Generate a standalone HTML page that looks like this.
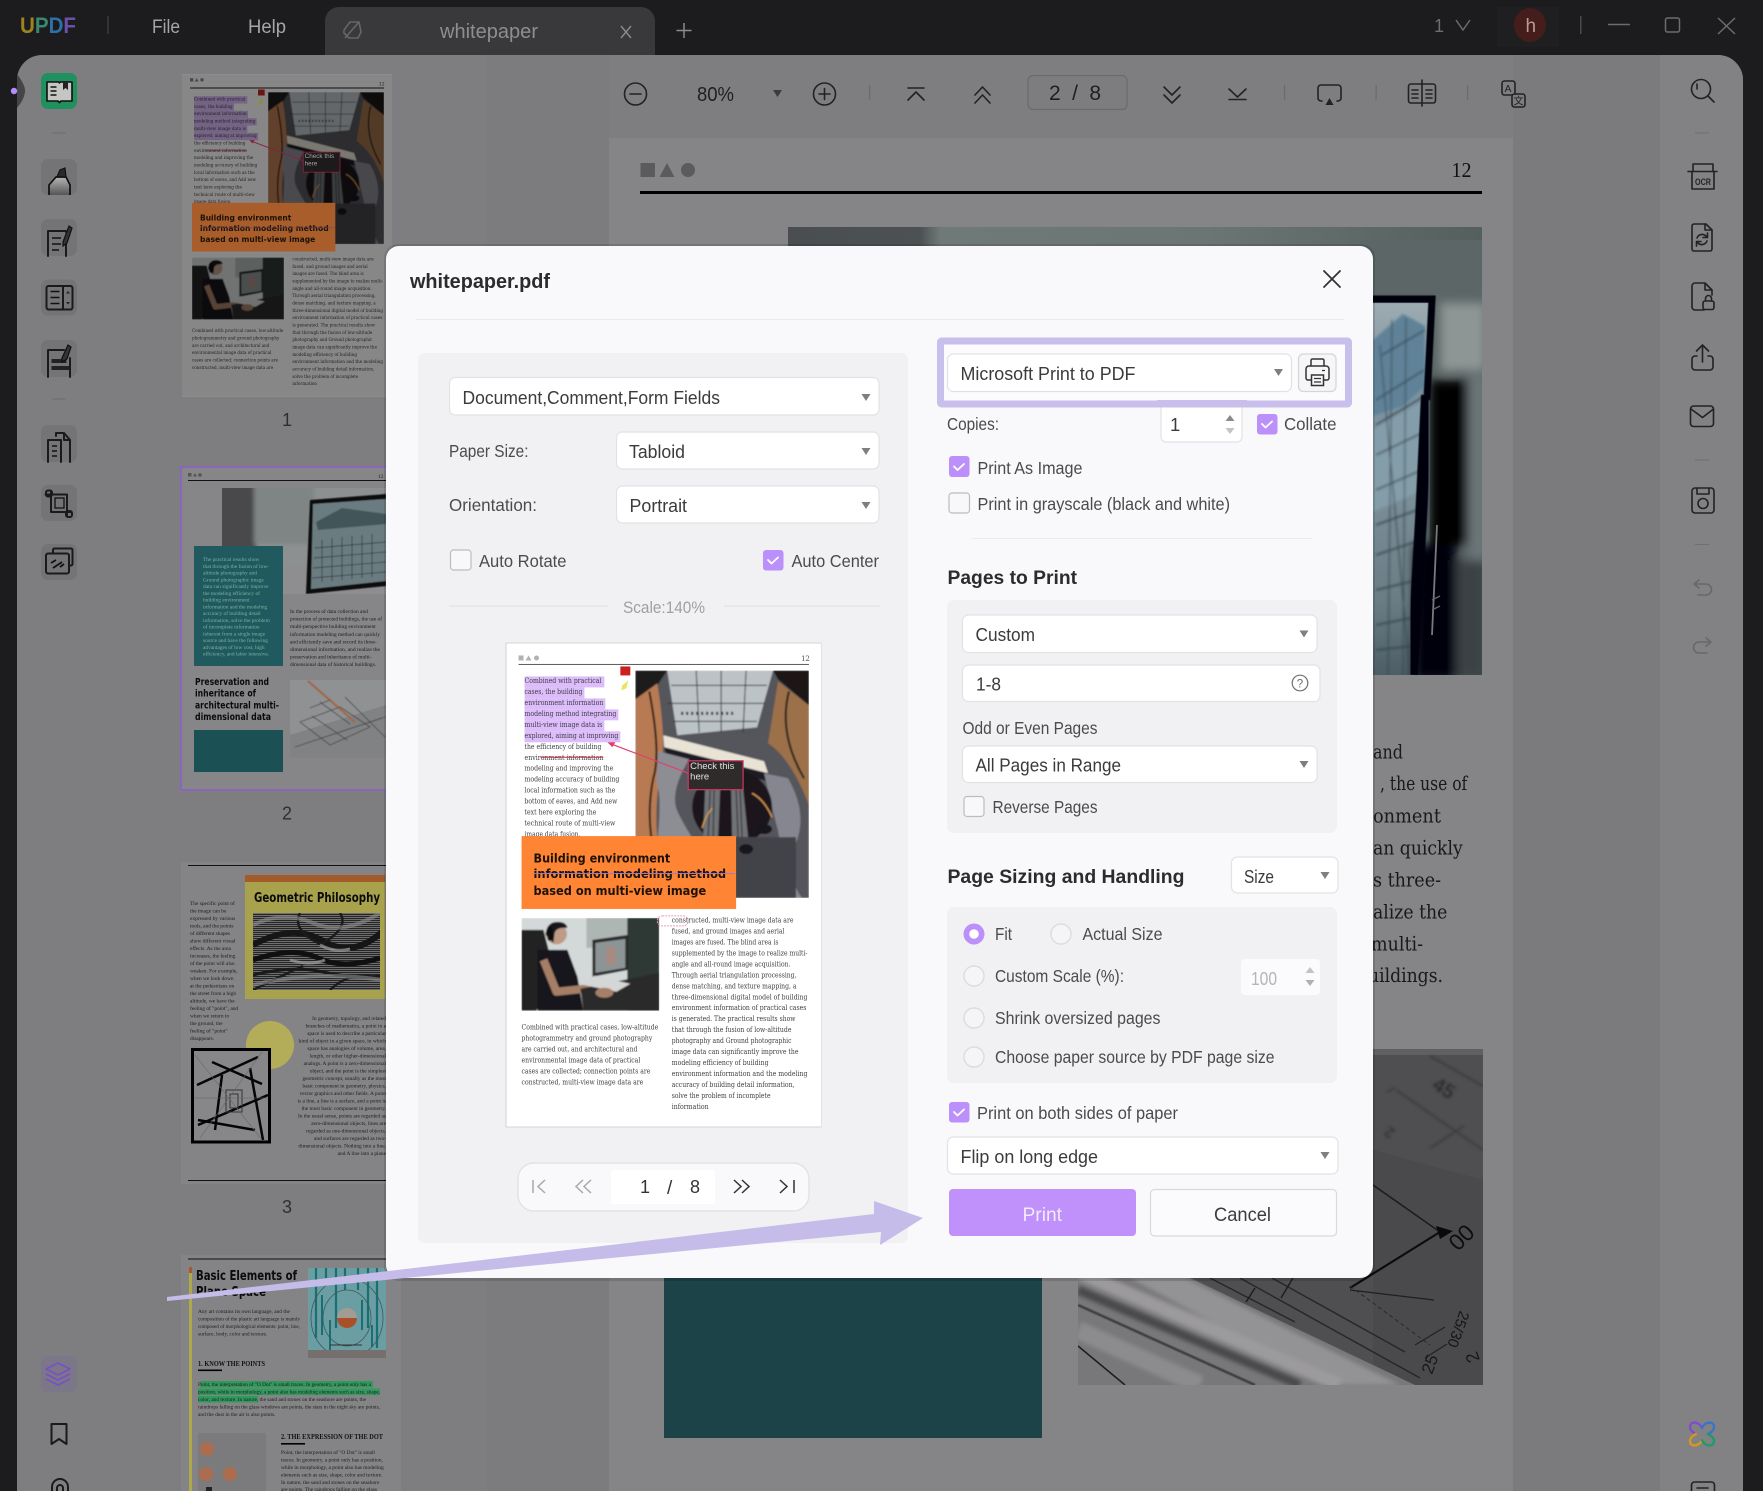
<!DOCTYPE html>
<html lang="en"><head><meta charset="utf-8"><title>UPDF whitepaper print dialog</title>
<style>
html,body{margin:0;padding:0;background:#1c1c1e;width:1763px;height:1491px;overflow:hidden}
svg.root{display:block;position:absolute;left:0;top:0}
text{font-family:"Liberation Sans","Noto Sans CJK SC",sans-serif;white-space:pre}
.u{font-size:18.5px;fill:#3b3b3e}
.l{font-size:17.5px;fill:#4b4b4e}
.b{font-size:20px;font-weight:700;fill:#2c2c2e}
.tb{font-size:19px;fill:#a6a6a6}
.sf{font-family:"DejaVu Serif",serif;font-size:7.4px;fill:#3f3f3f}
.ss{font-family:"Liberation Serif",serif;font-size:5.4px;fill:#1c1c1c}
.rb{font-family:"DejaVu Sans",sans-serif;font-weight:700;fill:#1c1206;font-size:12.5px}
.hd{font-family:"DejaVu Sans",sans-serif;font-weight:700;fill:#0b0b0b}
.mt{font-family:"DejaVu Serif",serif;font-size:19.5px;fill:#19191a}
.i{fill:none;stroke:#222;stroke-width:1.6;stroke-linecap:round;stroke-linejoin:round}
.ci{fill:none;stroke:#1a1a1a;stroke-width:2;stroke-linejoin:round;stroke-linecap:round}
.a{fill:#7f7f83}
.box{fill:#fff;stroke:#e2e2e6;stroke-width:1.2}
.on{fill:#bc90fa}
.off{fill:#f8f8fa;stroke:#bcbcc0;stroke-width:1.2}
.ck{fill:none;stroke:#fff;stroke-width:1.8;stroke-linecap:round;stroke-linejoin:round}
.ro{fill:#f5f5f7;stroke:#dcdce0;stroke-width:1.4}
.tile{fill:#747476}
</style></head><body>
<svg class="root" xmlns="http://www.w3.org/2000/svg" width="1763" height="1491" viewBox="0 0 1763 1491">
<defs>
<filter id="b1" x="-10%" y="-10%" width="120%" height="120%"><feGaussianBlur stdDeviation=".8"/></filter>
<filter id="b2" x="-20%" y="-20%" width="140%" height="140%"><feGaussianBlur stdDeviation="5"/></filter>
<filter id="b3" x="-20%" y="-20%" width="140%" height="140%"><feGaussianBlur stdDeviation="2"/></filter>
<filter id="b4" x="-20%" y="-20%" width="140%" height="140%"><feGaussianBlur stdDeviation="1.200"/></filter>
<filter id="b0" x="-10%" y="-10%" width="120%" height="120%"><feGaussianBlur stdDeviation=".4"/></filter>
<linearGradient id="g1" x1="0" y1="0" x2="0" y2="1"><stop offset="0" stop-color="#b5b5b5"/><stop offset="1" stop-color="#555"/></linearGradient>
<linearGradient id="strip" x1="788" y1="0" x2="1482" y2="0" gradientUnits="userSpaceOnUse"><stop offset="0" stop-color="#4a4e50"/><stop offset=".19" stop-color="#4c5153"/><stop offset=".22" stop-color="#6f7a78"/><stop offset=".6" stop-color="#6b7674"/><stop offset="1" stop-color="#545f5e"/></linearGradient>
<linearGradient id="scr" x1="0" y1="305" x2="0" y2="675" gradientUnits="userSpaceOnUse"><stop offset="0" stop-color="#9cabb0"/><stop offset=".2" stop-color="#7d94a2"/><stop offset=".5" stop-color="#7b909a"/><stop offset=".8" stop-color="#6a7c84"/><stop offset="1" stop-color="#4c5d66"/></linearGradient>
<pattern id="st" width="2" height="2" patternUnits="userSpaceOnUse"><rect width="2" height="2" fill="#6e6e70"/><rect width="2" height="1" fill="#262626"/></pattern>
<clipPath id="cp-main"><rect x="788" y="227" width="694" height="448"/></clipPath>
<clipPath id="cp-plan"><rect x="1078" y="1049" width="405" height="336"/></clipPath>
<clipPath id="cp-ph1"><rect x="129" y="27" width="174" height="228"/></clipPath>
<clipPath id="cp-ph2"><rect x="15" y="275" width="138" height="93"/></clipPath>
<clipPath id="cp-t2a"><rect x="222" y="488" width="164" height="106"/></clipPath>
<clipPath id="cp-t2b"><rect x="290" y="680" width="96" height="78"/></clipPath>
<clipPath id="cp-t3"><rect x="253" y="913" width="127" height="77"/></clipPath>
<clipPath id="cp-t3b"><rect x="194" y="1050" width="74" height="91"/></clipPath>
<clipPath id="cp-t4"><rect x="308" y="1268" width="78" height="90"/></clipPath>
</defs>

<!-- title bar -->
<rect width="1763" height="1491" fill="#1c1c1e"/>
<text x="20" y="33" font-size="22" font-weight="700" opacity=".85" textLength="56" lengthAdjust="spacingAndGlyphs"><tspan fill="#b3951f">U</tspan><tspan fill="#3f9a7c">P</tspan><tspan fill="#2f7fc0">D</tspan><tspan fill="#7b58c4">F</tspan></text>
<rect x="107.5" y="16" width="1" height="18" fill="#4a4a4c"/>
<text class="tb" x="152" y="33" textLength="28" lengthAdjust="spacingAndGlyphs">File</text>
<text class="tb" x="248" y="33" textLength="38" lengthAdjust="spacingAndGlyphs">Help</text>
<path d="M325 55V21a14 14 0 0 1 14-14H641a14 14 0 0 1 14 14V55Z" fill="#39393b"/>
<path d="M344 30l6-8h9l2 10-3 6h-9l-5-5zM345 38l14-16" fill="none" stroke="#666668" stroke-width="1.6"/>
<text x="440" y="38" font-size="20" fill="#8e8e90" textLength="98" lengthAdjust="spacingAndGlyphs">whitepaper</text>
<path d="M621 26l10 12M631 26l-10 12" stroke="#8a8a8c" stroke-width="1.5" fill="none"/>
<path d="M684 23v15M676.500 30.500h15" stroke="#8a8a8c" stroke-width="1.5" fill="none"/>
<text x="1434" y="32" font-size="18" fill="#6c6c6e">1</text>
<path d="M1456 20l7 10 7-10" stroke="#6c6c6e" stroke-width="1.5" fill="none"/>
<rect x="1497" y="7" width="62" height="40" fill="#1f1f21"/>
<ellipse cx="1530" cy="25" rx="16" ry="17" fill="#451d1a"/>
<text x="1525.500" y="32" font-size="19" fill="#bd9a94">h</text>
<rect x="1580" y="16" width="1.500" height="18" fill="#4a4a4c"/>
<path d="M1608 24.500h22" stroke="#6c6c6e" stroke-width="1.6"/>
<rect x="1665.500" y="18" width="14" height="14" rx="2" fill="none" stroke="#6c6c6e" stroke-width="1.5"/>
<path d="M1718 18l17 16M1735 18l-17 16" stroke="#6c6c6e" stroke-width="1.5" fill="none"/>

<!-- main panel -->
<path d="M17 80a25 25 0 0 1 25-25H1718a25 25 0 0 1 25 25V1491H17Z" fill="#7e7e80"/>
<rect x="487" y="55" width="122" height="1436" fill="#7c7c7e"/>
<rect x="1513" y="55" width="147" height="1436" fill="#7b7b7d"/>
<path d="M1660 55H1718a25 25 0 0 1 25 25V1491H1660Z" fill="#828284"/>
<rect x="609" y="138" width="904" height="1353" fill="#858587"/>
<path d="M17 74q9 12 8 18-1 8-8 16Z" fill="#454547"/>
<circle cx="14" cy="91" r="3.200" fill="#b68cff"/>

<!-- main page -->
<rect x="640.500" y="163" width="14.500" height="14" fill="#5b5b5d"/>
<path d="M667 163l7.500 14h-15Z" fill="#5b5b5d"/>
<circle cx="688" cy="170" r="7" fill="#5b5b5d"/>
<text x="1451.500" y="177" style="font-family:'Liberation Serif',serif" font-size="21" fill="#111" textLength="20" lengthAdjust="spacingAndGlyphs">12</text>
<rect x="640" y="191" width="842" height="3" fill="#000"/>

<g clip-path="url(#cp-main)">
<rect x="788" y="227" width="694" height="448" fill="url(#strip)"/>
<rect x="1360" y="240" width="122" height="70" fill="#5c6666"/>
<rect x="1360" y="303" width="70" height="372" fill="url(#scr)"/>
<g filter="url(#b2)">
<rect x="1440" y="303" width="46" height="68" fill="#8e9595"/>
<rect x="1468" y="375" width="20" height="185" fill="#6c7678"/>
<rect x="1430" y="380" width="38" height="165" fill="#000"/>
<rect x="1414" y="545" width="42" height="135" fill="#050507"/>
<rect x="1456" y="560" width="30" height="120" fill="#3a4245"/>
</g>
<g filter="url(#b4)">
<path d="M1373 340l30-26 22 12v60l-22 20-30 10Z" fill="#5f8298"/>
<path d="M1373 430l52-30-2 90-50 22Z" fill="#86a0ac" opacity=".8"/>
<path d="M1382 355l43-25M1376 400l48-30M1376 425l47-28M1376 455l46-22M1376 490l46-20M1376 525l44-16M1376 555l42-14M1376 590l42-10M1376 625l40-8M1376 650l38-4" stroke="#2c3b42" stroke-width="1.300" fill="none"/>
<path d="M1392 320l-4 355M1406 318l-3 357M1380 345l30 330" stroke="#34444c" stroke-width="1" fill="none"/>
</g>
<path d="M1360 299H1432L1427 400" stroke="#050507" stroke-width="7" fill="none" filter="url(#b0)"/>
<path d="M1427 395l-6 125-9 155" stroke="#060608" stroke-width="12" fill="none" filter="url(#b0)"/>
<path d="M1437 525l-5 110" stroke="#7a7a7a" stroke-width="1.800" fill="none"/>
<path d="M1432 600l8-4M1432 610l8-4" stroke="#666" stroke-width="1.400" fill="none"/>
</g>

<text class="mt" x="1373" y="758.500" textLength="30" lengthAdjust="spacingAndGlyphs">and</text>
<text class="mt" x="1380" y="790" textLength="87.300" lengthAdjust="spacingAndGlyphs">, the use of</text>
<text class="mt" x="1373" y="822.500" textLength="68" lengthAdjust="spacingAndGlyphs">onment</text>
<text class="mt" x="1373" y="854.500" textLength="89.700" lengthAdjust="spacingAndGlyphs">an quickly</text>
<text class="mt" x="1373" y="886.500" textLength="68" lengthAdjust="spacingAndGlyphs">s three-</text>
<text class="mt" x="1373" y="918.500" textLength="74.300" lengthAdjust="spacingAndGlyphs">alize the</text>
<text class="mt" x="1371" y="950.500" textLength="52" lengthAdjust="spacingAndGlyphs">multi-</text>
<text class="mt" x="1368" y="982" textLength="75" lengthAdjust="spacingAndGlyphs">uildings.</text>

<!-- teal + blueprint -->
<rect x="664" y="1270" width="378" height="168" fill="#1c4347"/>
<g clip-path="url(#cp-plan)">
<rect x="1078" y="1049" width="405" height="336" fill="#4f4e50"/>
<rect x="1373" y="1049" width="110" height="6" fill="#605f61"/>
<path d="M1373 1150L1483 1180V1385H1373Z" fill="#4a494b"/>
<path d="M1078 1278H1190L1415 1385H1078Z" fill="#787779"/>
<g filter="url(#b3)">
<path d="M1130 1278H1185L1400 1385H1330Z" fill="#939294"/>
<path d="M1078 1290L1300 1385" stroke="#4a4a4c" stroke-width="9"/>
<path d="M1078 1272L1340 1385" stroke="#9b9a9c" stroke-width="14"/>
<path d="M1078 1330L1200 1385" stroke="#8c8b8d" stroke-width="18"/>
</g>
<path d="M1078 1305L1255 1385" stroke="#3c3c3e" stroke-width="2.500" filter="url(#b0)"/>
<path d="M1078 1346L1125 1385" stroke="#1c1c1d" stroke-width="1.500"/>
<path d="M1210 1278L1295 1322M1240 1278L1420 1378M1272 1278L1405 1352" stroke="#202021" stroke-width="1.400" opacity=".85"/>
<path d="M1293 1278l-12 20M1255 1288l-9 14" stroke="#1c1c1d" stroke-width="1.400"/>
<path d="M1350 1288L1440 1232" stroke="#0c0c0d" stroke-width="2.200"/>
<path d="M1373 1185L1440 1232" stroke="#1c1c1d" stroke-width="1.500"/>
<path d="M1436 1226l17 5-13 8Z" fill="#0a0a0b"/>
<path d="M1350 1290L1434 1300" stroke="#1f1f20" stroke-width="1.200"/>
<path d="M1400 1280L1430 1347" stroke="#2a2a2b" stroke-width="0"/>
<path d="M1350 1286L1430 1345" stroke="#2a2a2b" stroke-width="1" stroke-dasharray="4 3"/>
<path d="M1415 1345l30-18M1425 1358l22-14" stroke="#222" stroke-width="1.200"/>
<text transform="translate(1458 1252) rotate(-45)" font-size="23" fill="#0e0e0f">00</text>
<text transform="translate(1460 1310) rotate(110)" font-size="15" fill="#171718">25/30</text>
<text transform="translate(1432 1375) rotate(-70)" font-size="17" fill="#191919">25</text>
<text transform="translate(1480 1360) rotate(-110)" font-size="18" fill="#191919">2</text>
<g filter="url(#b4)">
<text transform="translate(1431 1088) rotate(32)" font-size="20" font-weight="700" fill="#2e2e30">45</text>
<text transform="translate(1396 1130) rotate(210)" font-size="16" font-weight="700" fill="#38383a">2</text>
<path d="M1430 1056l53 30M1396 1090l87 60M1430 1148l34-22M1395 1088l-8 4" stroke="#3c3c3e" stroke-width="2" fill="none"/>
</g>
</g>

<!-- left tools -->
<rect x="41" y="73" width="36" height="36" rx="7" fill="#20905f"/>
<path d="M47 82h11c1 0 1.500 .5 1.500 1 0-.5.5-1 1.500-1h11v19H61l-1.500 1.500L58 101H47Z" fill="#c5c5c3" stroke="#0e0e0e" stroke-width="1.600" stroke-linejoin="round"/>
<path d="M50.500 87h6M50.500 91h6M50.500 95h6" stroke="#111" stroke-width="1.400"/>
<path d="M63 81h5v9l-2.500-2-2.500 2Z" fill="#222"/>
<rect x="52" y="132.500" width="14" height="1" fill="#6c6c6e"/>
<rect class="tile" x="41" y="159" width="36" height="36" rx="7"/>
<path d="M49 195v-10l7-8h10l4 8v10" fill="url(#g1)" stroke="#0f0f0f" stroke-width="1.700" stroke-linejoin="round"/>
<path d="M57 177l3-7 5-2 1 9Z" fill="#2a2a2a" stroke="#111" stroke-width="1.200"/>
<rect class="tile" x="41" y="219" width="36" height="37" rx="7"/>
<path d="M66 232v-1H48v25M66 240v16" class="ci"/>
<path d="M52 238h9M52 244h9M52 250h7" stroke="#111" stroke-width="1.500"/>
<path d="M63 242l6-16 3 2-5 15-4 3Z" fill="#333" stroke="#111" stroke-width="1.200"/>
<rect class="tile" x="41" y="279.500" width="36" height="36" rx="7"/>
<rect x="46.500" y="286" width="26" height="23.500" rx="2" class="ci"/>
<path d="M63 286v23.500" class="ci"/>
<path d="M50.500 291.500h9M50.500 297.500h9M50.500 303.500h9" stroke="#111" stroke-width="1.500"/>
<path d="M66 293.500h4l-2-2.500ZM66 302h4l-2 2.500Z" fill="#222"/>
<rect class="tile" x="41" y="340" width="36" height="37" rx="7"/>
<path d="M64 350H48v27M70 358v19" class="ci"/>
<rect x="51.500" y="359" width="15" height="4" fill="#222"/>
<rect x="51.500" y="366" width="18" height="4" fill="#222"/>
<path d="M62 358l6-13 3 2-4 12-5 3Z" fill="#333" stroke="#111" stroke-width="1.200"/>
<rect x="52" y="398.500" width="14" height="1" fill="#6c6c6e"/>
<rect class="tile" x="41" y="425" width="36" height="37" rx="7"/>
<path d="M48 462v-22h13l0 22M56 436v-3h8l6 7v22M64 433v7h6" class="ci"/>
<path d="M52 446h5M52 451h5M52 456h5" stroke="#111" stroke-width="1.500"/>
<rect class="tile" x="41" y="485" width="36" height="36" rx="7"/>
<path d="M51 491v21h20M45.500 494.500H67v21" class="ci"/>
<rect x="46" y="490.500" width="6" height="6" rx="2" class="ci"/>
<rect x="66" y="511" width="6" height="6" rx="2" class="ci"/>
<rect x="55" y="498" width="9" height="10" fill="none" stroke="#111" stroke-width="1.300"/>
<rect class="tile" x="41" y="544" width="36" height="36" rx="7"/>
<path d="M53 553v-3a1.500 1.500 0 0 1 1.500-1.500H71a1.500 1.500 0 0 1 1.500 1.500v14a1.500 1.500 0 0 1-1.500 1.500h-2" class="ci"/>
<rect x="46" y="553.500" width="23" height="20" rx="2" class="ci"/>
<path d="M51 563l5-3M53 568l9-6M60 567l4-3" stroke="#111" stroke-width="1.800"/>
<rect x="41" y="1356" width="36" height="36" rx="6" fill="#7c7788"/>
<path d="M58 1363l12 6-12 6-12-6ZM46 1374l12 6 12-6M46 1379l12 6 12-6" fill="none" stroke="#7750c6" stroke-width="1.600" stroke-linejoin="round"/>
<path d="M51.500 1424h15v20l-7.500-5-7.500 5Z" class="ci"/>
<path d="M52 1491v-4a8 8 0 0 1 16 0v4M57 1491v-3a3 3 0 0 1 6 0v3" class="ci"/>

<!-- thumbnail 1 -->
<svg x="182" y="74" width="210" height="323" viewBox="0 0 315 484">
<rect width="315" height="484" fill="#fff"/>
<rect x="12" y="6" width="5" height="5" fill="#8a8a8a"/><path d="M22 6l3 5h-6Z" fill="#8a8a8a"/><circle cx="30" cy="8.500" r="2.500" fill="#8a8a8a"/>
<text class="sf" x="295" y="17" textLength="9">12</text>
<rect x="12" y="20" width="291" height="1.500" fill="#222"/>
<g clip-path="url(#cp-ph1)"><g filter="url(#b1)">
<rect x="129" y="27" width="174" height="228" fill="#55555b"/>
<path d="M161 27H267L251 84L171 92Z" fill="#bcc3c7"/>
<path d="M129 27H161L151 42L129 56Z" fill="#1c1a1a"/><path d="M267 27H303V62L272 36Z" fill="#1b1919"/>
<path d="M129 56L151 40Q160 95 155 125Q148 160 151 194H129Z" fill="#b87a52"/>
<path d="M303 62L272 38L262 100Q285 115 303 162Z" fill="#9c7048"/>
<path d="M143 48Q155 110 147 135Q141 165 145 194" stroke="#221a16" stroke-width="2" fill="none"/>
<path d="M283 48Q272 90 298 135" stroke="#1e1a18" stroke-width="2" fill="none"/>
<path d="M157 92L258 118L262 130L158 104Z" fill="#e9e3d6"/>
<path d="M158 104L262 130L262 138L160 112Z" fill="#1f1f22"/>
<path d="M152 108L183 116Q162 150 172 170T190 200L151 200Q156 150 150 140Z" fill="#8d8d94"/>
<path d="M258 130L282 135Q302 170 290 200T296 255H262Q280 210 270 180Z" fill="#868690"/>
<ellipse cx="226" cy="164" rx="40" ry="38" fill="#1a191c"/>
<path d="M199 146H214L212 194H197ZM225 146H237L242 194H226Z" fill="#6f7276"/>
<path d="M204 146l-2 48M208 146l-1 48M230 146l2 48M234 146l2 48" stroke="#232326" stroke-width="1" fill="none"/>
<path d="M190 194H290V255H222Q205 225 190 194Z" fill="#434349"/>
<path d="M206 165q-7 8-10 20M246 150q12 6 20 24" stroke="#d99a50" stroke-width="1.400" fill="none"/>
<path d="M165 42h96M161 60h98M167 78h84M190 27l3 62M215 27v62M240 27l-3 62" stroke="#33363a" stroke-width="1" fill="none"/>
<path d="M175 70h55" stroke="#222" stroke-width="3" stroke-dasharray="2 3"/>
<ellipse cx="258" cy="186" rx="8" ry="5" fill="#17171a"/><ellipse cx="240" cy="206" rx="7" ry="5" fill="#17171a"/>
</g></g>
<g fill="#dcbcfb"><rect x="18" y="33" width="80" height="11"/><rect x="18" y="44" width="60" height="11"/><rect x="18" y="55" width="81" height="11"/><rect x="18" y="66" width="94" height="11"/><rect x="18" y="77" width="80" height="11"/><rect x="18" y="88" width="96" height="11"/></g>
<text class="sf" x="18" y="39.500" textLength="77" lengthAdjust="spacingAndGlyphs">Combined with practical</text>
<text class="sf" x="18" y="50.500" textLength="58" lengthAdjust="spacingAndGlyphs">cases, the building</text>
<text class="sf" x="18" y="61.500" textLength="79" lengthAdjust="spacingAndGlyphs">environment information</text>
<text class="sf" x="18" y="72.500" textLength="92" lengthAdjust="spacingAndGlyphs">modeling method integrating</text>
<text class="sf" x="18" y="83.500" textLength="78" lengthAdjust="spacingAndGlyphs">multi-view image data is</text>
<text class="sf" x="18" y="94.500" textLength="94" lengthAdjust="spacingAndGlyphs">explored, aiming at improving</text>
<text class="sf" x="18" y="105.500" textLength="77" lengthAdjust="spacingAndGlyphs">the efficiency of building</text>
<text class="sf" x="18" y="116.500" textLength="79" lengthAdjust="spacingAndGlyphs">environment information</text>
<rect x="34" y="113.500" width="63" height="1" fill="#d0304a"/>
<text class="sf" x="18" y="127.500" textLength="89" lengthAdjust="spacingAndGlyphs">modeling and improving the</text>
<text class="sf" x="18" y="138.500" textLength="95" lengthAdjust="spacingAndGlyphs">modeling accuracy of building</text>
<text class="sf" x="18" y="149.500" textLength="91" lengthAdjust="spacingAndGlyphs">local information such as the</text>
<text class="sf" x="18" y="160.500" textLength="93" lengthAdjust="spacingAndGlyphs">bottom of eaves, and Add new</text>
<text class="sf" x="18" y="171.500" textLength="72" lengthAdjust="spacingAndGlyphs">text here exploring the</text>
<text class="sf" x="18" y="182.500" textLength="91" lengthAdjust="spacingAndGlyphs">technical route of multi-view</text>
<text class="sf" x="18" y="193.500" textLength="56" lengthAdjust="spacingAndGlyphs">image data fusion.</text>
<text class="sf" x="165.500" y="279.500" textLength="122" lengthAdjust="spacingAndGlyphs">constructed, multi-view image data are</text>
<text class="sf" x="165.500" y="290.500" textLength="113" lengthAdjust="spacingAndGlyphs">fused, and ground images and aerial</text>
<text class="sf" x="165.500" y="301.500" textLength="107" lengthAdjust="spacingAndGlyphs">images are fused. The blind area is</text>
<text class="sf" x="165.500" y="312.500" textLength="136" lengthAdjust="spacingAndGlyphs">supplemented by the image to realize multi-</text>
<text class="sf" x="165.500" y="323.500" textLength="119" lengthAdjust="spacingAndGlyphs">angle and all-round image acquisition.</text>
<text class="sf" x="165.500" y="334.500" textLength="125" lengthAdjust="spacingAndGlyphs">Through aerial triangulation processing,</text>
<text class="sf" x="165.500" y="345.500" textLength="125" lengthAdjust="spacingAndGlyphs">dense matching, and texture mapping, a</text>
<text class="sf" x="165.500" y="356.500" textLength="136" lengthAdjust="spacingAndGlyphs">three-dimensional digital model of building</text>
<text class="sf" x="165.500" y="367.500" textLength="135" lengthAdjust="spacingAndGlyphs">environment information of practical cases</text>
<text class="sf" x="165.500" y="378.500" textLength="124" lengthAdjust="spacingAndGlyphs">is generated. The practical results show</text>
<text class="sf" x="165.500" y="389.500" textLength="120" lengthAdjust="spacingAndGlyphs">that through the fusion of low-altitude</text>
<text class="sf" x="165.500" y="400.500" textLength="120" lengthAdjust="spacingAndGlyphs">photography and Ground photographic</text>
<text class="sf" x="165.500" y="411.500" textLength="127" lengthAdjust="spacingAndGlyphs">image data can significantly improve the</text>
<text class="sf" x="165.500" y="422.500" textLength="97" lengthAdjust="spacingAndGlyphs">modeling efficiency of building</text>
<text class="sf" x="165.500" y="433.500" textLength="136" lengthAdjust="spacingAndGlyphs">environment information and the modeling</text>
<text class="sf" x="165.500" y="444.500" textLength="123" lengthAdjust="spacingAndGlyphs">accuracy of building detail information,</text>
<text class="sf" x="165.500" y="455.500" textLength="99" lengthAdjust="spacingAndGlyphs">solve the problem of incomplete</text>
<text class="sf" x="165.500" y="466.500" textLength="37" lengthAdjust="spacingAndGlyphs">information</text>
<g clip-path="url(#cp-ph2)"><g filter="url(#b1)">
<rect x="15" y="275" width="138" height="93" fill="#d3d9d8"/>
<rect x="80" y="275" width="45" height="30" fill="#aeb6b4"/><rect x="121" y="275" width="32" height="93" fill="#2e3836"/>
<path d="M86 297l36-5v35l-36 7Z" fill="#2a2a2c"/><path d="M89 300l30-4v29l-30 5Z" fill="#8c9496"/><rect x="100" y="304" width="9" height="18" fill="#a88a80"/>
<path d="M15 287H37L48 330L30 368H15Z" fill="#212123"/>
<path d="M31 307H61L71 334L77 368H31Z" fill="#17171a"/>
<circle cx="50" cy="291" r="10.500" fill="#bf9a86"/><path d="M39 292q1-13 12-13 9 0 10 6-12-1-13 6l-1 9Z" fill="#16161a"/>
<rect x="41" y="284" width="5" height="14" rx="2.500" fill="#0c0c0e"/>
<path d="M37 317L50 349L97 344" stroke="#a57e66" stroke-width="8" fill="none" stroke-linejoin="round"/>
<path d="M74 346L153 330V368H77Z" fill="#29292b"/>
<path d="M88 333l36 8-14 8-34-7Z" fill="#d5d6d6"/>
<ellipse cx="98" cy="350" rx="9" ry="5" fill="#a67f69"/>
</g></g>
<text class="sf" x="15" y="387" textLength="137" lengthAdjust="spacingAndGlyphs">Combined with practical cases, low-altitude</text>
<text class="sf" x="15" y="398" textLength="131" lengthAdjust="spacingAndGlyphs">photogrammetry and ground photography</text>
<text class="sf" x="15" y="409" textLength="116" lengthAdjust="spacingAndGlyphs">are carried out, and architectural and</text>
<text class="sf" x="15" y="420" textLength="119" lengthAdjust="spacingAndGlyphs">environmental image data of practical</text>
<text class="sf" x="15" y="431" textLength="129" lengthAdjust="spacingAndGlyphs">cases are collected; connection points are</text>
<text class="sf" x="15" y="442" textLength="122" lengthAdjust="spacingAndGlyphs">constructed, multi-view image data are</text>
<rect width="315" height="484" fill="#000" opacity=".47"/>
<rect x="15" y="193" width="215" height="73" fill="#a85d2a"/>
<text class="rb" x="27" y="219.700" textLength="137" lengthAdjust="spacingAndGlyphs">Building environment</text>
<text class="rb" x="27" y="235.200" textLength="193" lengthAdjust="spacingAndGlyphs">information modeling method</text>
<text class="rb" x="27" y="252" textLength="173" lengthAdjust="spacingAndGlyphs">based on multi-view image</text>
<rect x="27" y="230" width="202" height="1" fill="#6b4a70"/>
<path d="M103 100L182 130" stroke="#8a1f40" stroke-width="1.300"/>
<path d="M101 99l8 0-3 5Z" fill="#8a1f40"/>
<rect x="182" y="117" width="55" height="30" fill="#1d1a1b" stroke="#8a1f40" stroke-width="1.300"/>
<text x="184" y="126" font-size="9.500" fill="#a5a5a5">Check this</text><text x="184" y="137" font-size="9.500" fill="#a5a5a5">here</text>
<rect x="114" y="23" width="10" height="9" fill="#6a1414"/>
<path d="M116 40l6-3-2 7-5 2Z" fill="#8f8c2c"/>
</svg>
<text x="287" y="426" text-anchor="middle" font-size="18" fill="#2f2f31">1</text>

<!-- thumbnail 2 -->
<rect x="181" y="467" width="240" height="323" fill="#868688" stroke="#8a63c4" stroke-width="1.800"/>
<rect x="188" y="473" width="3.500" height="3.500" fill="#555"/><path d="M195 473l2 3.500h-4Z" fill="#555"/><circle cx="200" cy="475" r="1.800" fill="#555"/>
<text class="ss" x="378" y="478" font-size="5">12</text>
<rect x="188" y="480" width="210" height="1" fill="#111"/>
<g clip-path="url(#cp-t2a)">
<rect x="222" y="488" width="164" height="106" fill="#8c9090"/>
<rect x="222" y="565" width="164" height="30" fill="#8e8e90"/>
<g filter="url(#b3)"><rect x="218" y="484" width="38" height="85" fill="#484a4b"/><rect x="254" y="484" width="60" height="60" fill="#7f8585"/></g>
<g filter="url(#b0)">
<path d="M310 500l76-6v92l-80 8Z" fill="#0b0d0e"/>
<path d="M313 504l73-5v82l-75 8Z" fill="#6a7c80"/>
<path d="M316 522l26-14 44 6v10l-68 6Z" fill="#43565a"/>
<path d="M322 540v42M332 538v43M342 537v43M352 536v43M362 535v43M372 534v43M315 548l71-6M314 558l72-6M313 568l73-6M312 578l74-6" stroke="#283438" stroke-width=".7" fill="none"/>
</g>
</g>
<rect x="194" y="546" width="89" height="120" fill="#215a5e"/>
<text class="ss" style="fill:#7cb1a4" x="203" y="561">The practical results show</text>
<text class="ss" style="fill:#7cb1a4" x="203" y="567.800">that through the fusion of low-</text>
<text class="ss" style="fill:#7cb1a4" x="203" y="574.600">altitude photography and</text>
<text class="ss" style="fill:#7cb1a4" x="203" y="581.300">Ground photographic image</text>
<text class="ss" style="fill:#7cb1a4" x="203" y="588">data can significantly improve</text>
<text class="ss" style="fill:#7cb1a4" x="203" y="594.800">the modeling efficiency of</text>
<text class="ss" style="fill:#7cb1a4" x="203" y="601.600">building environment</text>
<text class="ss" style="fill:#7cb1a4" x="203" y="608.300">information and the modeling</text>
<text class="ss" style="fill:#7cb1a4" x="203" y="615">accuracy of building detail</text>
<text class="ss" style="fill:#7cb1a4" x="203" y="621.800">information, solve the problem</text>
<text class="ss" style="fill:#7cb1a4" x="203" y="628.600">of incomplete information</text>
<text class="ss" style="fill:#7cb1a4" x="203" y="635.300">inherent from a single image</text>
<text class="ss" style="fill:#7cb1a4" x="203" y="642">source and have the following</text>
<text class="ss" style="fill:#7cb1a4" x="203" y="648.800">advantages of low cost, high</text>
<text class="ss" style="fill:#7cb1a4" x="203" y="655.600">efficiency, and labor intensive.</text>
<text class="ss" x="290" y="613">In the process of data collection and</text>
<text class="ss" x="290" y="620.500" textLength="92" lengthAdjust="spacingAndGlyphs">protection of protected buildings, the use of</text>
<text class="ss" x="290" y="628">multi-perspective building environment</text>
<text class="ss" x="290" y="636" textLength="90" lengthAdjust="spacingAndGlyphs">information modeling method can quickly</text>
<text class="ss" x="290" y="643.500">and efficiently save and record its three-</text>
<text class="ss" x="290" y="651" textLength="90" lengthAdjust="spacingAndGlyphs">dimensional information, and realize the</text>
<text class="ss" x="290" y="658.500">preservation and inheritance of multi-</text>
<text class="ss" x="290" y="666" textLength="86" lengthAdjust="spacingAndGlyphs">dimensional data of historical buildings.</text>
<text class="hd" x="195" y="685" font-size="10" textLength="74" lengthAdjust="spacingAndGlyphs">Preservation and</text>
<text class="hd" x="195" y="696.500" font-size="10" textLength="61" lengthAdjust="spacingAndGlyphs">inheritance of</text>
<text class="hd" x="195" y="708.500" font-size="10" textLength="84" lengthAdjust="spacingAndGlyphs">architectural multi-</text>
<text class="hd" x="195" y="720" font-size="10" textLength="76" lengthAdjust="spacingAndGlyphs">dimensional data</text>
<g clip-path="url(#cp-t2b)">
<rect x="290" y="680" width="96" height="78" fill="#8f9192"/>
<path d="M290 735L386 705V758H290Z" fill="#808283"/>
<g filter="url(#b0)">
<path d="M308 681L355 722" stroke="#a3664a" stroke-width="2"/>
<path d="M300 722l40-15 30 20-40 18ZM320 702l30 22M295 747l90-30M345 697l40 40M312 716l35 24M330 700l-20 8" stroke="#3c3c3c" stroke-width=".6" fill="none"/>
</g>
</g>
<rect x="194" y="730" width="89" height="42" fill="#1b5054"/>
<text x="287" y="819.500" text-anchor="middle" font-size="18" fill="#2f2f31">2</text>

<!-- thumbnail 3 -->
<rect x="181" y="862" width="220" height="322" fill="#848486"/>
<rect x="188" y="865" width="205" height="1" fill="#111"/>
<rect x="245" y="875" width="140" height="7" fill="#a45b2c"/>
<rect x="245" y="882" width="140" height="117" fill="#a8a24c"/>
<text class="hd" x="254" y="902" font-size="13" textLength="126" lengthAdjust="spacingAndGlyphs">Geometric Philosophy</text>
<rect x="253" y="913" width="127" height="77" fill="url(#st)"/>
<g clip-path="url(#cp-t3)" fill="none">
<path d="M253 945q40-22 70-4t60-10" stroke="#161616" stroke-width="6"/>
<path d="M253 960q40-14 65-2t62 0" stroke="#101010" stroke-width="5"/>
<path d="M253 975q40-10 70-3t60 4" stroke="#1a1a1a" stroke-width="3"/>
<path d="M300 913q-10 20 30 35M340 913q10 15-20 32M330 990q20-20 50-12M253 990q30-15 50-24" stroke="#1c1c1c" stroke-width="2.500"/>
<path d="M253 925q30-15 60-2t67-10M253 985q60-15 130-5" stroke="#8d8d8f" stroke-width="4" opacity=".6"/>
<path d="M320 945q15 8 30 4M290 960q20 6 35 0" stroke="#a2a2a4" stroke-width="3" opacity=".7"/>
</g>
<text class="ss" x="190" y="905">The specific point of</text>
<text class="ss" x="190" y="912.500">the image can be</text>
<text class="ss" x="190" y="920">expressed by various</text>
<text class="ss" x="190" y="927.500">tools, and the points</text>
<text class="ss" x="190" y="935">of different shapes</text>
<text class="ss" x="190" y="942.500">show different visual</text>
<text class="ss" x="190" y="950">effects. As the area</text>
<text class="ss" x="190" y="957.500">increases, the feeling</text>
<text class="ss" x="190" y="965">of the point will also</text>
<text class="ss" x="190" y="972.500">weaken. For example,</text>
<text class="ss" x="190" y="980">when we look down</text>
<text class="ss" x="190" y="987.500">at the pedestrians on</text>
<text class="ss" x="190" y="995">the street from a high</text>
<text class="ss" x="190" y="1002.500">altitude, we have the</text>
<text class="ss" x="190" y="1010">feeling of "point", and</text>
<text class="ss" x="190" y="1017.500">when we return to</text>
<text class="ss" x="190" y="1025">the ground, the</text>
<text class="ss" x="190" y="1032.500">feeling of "point"</text>
<text class="ss" x="190" y="1040">disappears.</text>
<circle cx="270" cy="1045" r="24" fill="#b3ad5a"/>
<rect x="192.500" y="1049.500" width="77" height="92.500" fill="#878789" stroke="#000" stroke-width="3"/>
<g clip-path="url(#cp-t3b)" fill="none">
<path d="M197 1085L258 1057M212 1062L262 1084M198 1120L255 1130M222 1075L215 1130M250 1068L263 1140M198 1125L268 1095" stroke="#050505" stroke-width="2.500"/>
<path d="M226 1090h16v22h-16ZM230 1094h8v14h-8Z" stroke="#333" stroke-width="1"/>
<path d="M195 1055L262 1140M262 1052L200 1138M194 1098L270 1098" stroke="#666" stroke-width=".6"/>
</g>
<g text-anchor="end">
<text class="ss" x="386" y="1020">In geometry, topology, and related</text>
<text class="ss" x="386" y="1027.500">branches of mathematics, a point in a</text>
<text class="ss" x="386" y="1035">space is used to describe a particular</text>
<text class="ss" x="386" y="1042.500">kind of object in a given space, in which</text>
<text class="ss" x="386" y="1050">space has analogies of volume, area,</text>
<text class="ss" x="386" y="1057.500">length, or other higher-dimensional</text>
<text class="ss" x="386" y="1065">analogs. A point is a zero-dimensional</text>
<text class="ss" x="386" y="1072.500">object, and the point is the simplest</text>
<text class="ss" x="386" y="1080">geometric concept, usually as the most</text>
<text class="ss" x="386" y="1087.500">basic component in geometry, physics,</text>
<text class="ss" x="386" y="1095">vector graphics and other fields. A point</text>
<text class="ss" x="386" y="1102.500">is a line, a line is a surface, and a point is</text>
<text class="ss" x="386" y="1110">the most basic component in geometry.</text>
<text class="ss" x="386" y="1117.500">In the usual sense, points are regarded as</text>
<text class="ss" x="386" y="1125">zero-dimensional objects, lines are</text>
<text class="ss" x="386" y="1132.500">regarded as one-dimensional objects,</text>
<text class="ss" x="386" y="1140">and surfaces are regarded as two-</text>
<text class="ss" x="386" y="1147.500">dimensional objects. Nothing into a line,</text>
<text class="ss" x="386" y="1155">and A line into a plane</text>
</g>
<rect x="188" y="1180" width="205" height="1" fill="#111"/>
<text x="287" y="1213" text-anchor="middle" font-size="18" fill="#2f2f31">3</text>

<!-- thumbnail 4 -->
<rect x="181" y="1255" width="220" height="236" fill="#848486"/>
<rect x="188" y="1258.500" width="205" height="1" fill="#111"/>
<rect x="189" y="1267" width="3" height="6" fill="#a45b2c"/>
<rect x="189" y="1273" width="3" height="218" fill="#b0a94c"/>
<text class="hd" x="196" y="1280" font-size="13" textLength="101" lengthAdjust="spacingAndGlyphs">Basic Elements of</text>
<text class="hd" x="196" y="1296" font-size="13" textLength="70" lengthAdjust="spacingAndGlyphs">Plane Space</text>
<rect x="308" y="1268" width="78" height="90" fill="#6a9ea3"/>
<g clip-path="url(#cp-t4)" fill="none">
<path d="M316 1268v70M326 1268v10M336 1268v60M345 1268v22M358 1268v22M368 1268v60M377 1268v80" stroke="#1a6f74" stroke-width="2.200"/>
<path d="M322 1295v40M330 1320v30M362 1300v30M372 1325v22" stroke="#1a6f74" stroke-width="2"/>
<ellipse cx="347" cy="1318" rx="36" ry="40" stroke="#3a5a5e" stroke-width=".8"/>
<ellipse cx="347" cy="1318" rx="24" ry="28" stroke="#3a5a5e" stroke-width=".8"/>
<circle cx="347" cy="1318" r="10" fill="#a39c95"/>
<path d="M337 1318h20a10 10 0 0 1-20 0Z" fill="#aa5028"/>
<rect x="308" y="1350" width="78" height="8" fill="#75706e"/>
<path d="M330 1345h32" stroke="#333" stroke-width="1"/>
</g>
<text class="ss" x="198" y="1313">Any art contains its own language, and the</text>
<text class="ss" x="198" y="1320.500" textLength="102" lengthAdjust="spacingAndGlyphs">composition of the plastic art language is mainly</text>
<text class="ss" x="198" y="1328" textLength="102" lengthAdjust="spacingAndGlyphs">composed of morphological elements: point, line,</text>
<text class="ss" x="198" y="1335.500">surface, body, color and texture.</text>
<text x="198" y="1366" font-size="7" font-weight="700" style="font-family:'Liberation Serif',serif;fill:#121212" textLength="67" lengthAdjust="spacingAndGlyphs">1. KNOW THE POINTS</text>
<rect x="198" y="1369.500" width="24" height="1.600" fill="#000"/>
<rect x="200" y="1381" width="173" height="6.500" fill="#2f9a5c"/>
<rect x="198" y="1388.500" width="182" height="6.500" fill="#2f9a5c"/>
<rect x="198" y="1396" width="60" height="6.500" fill="#2f9a5c"/>
<text class="ss" x="198" y="1386" textLength="173" lengthAdjust="spacingAndGlyphs">Point, the interpretation of "O Dot" is small traces. In geometry, a point only has a</text>
<text class="ss" x="198" y="1393.500" textLength="182" lengthAdjust="spacingAndGlyphs">position, while in morphology, a point also has modeling elements such as size, shape,</text>
<text class="ss" x="198" y="1401" textLength="168" lengthAdjust="spacingAndGlyphs">color, and texture. In nature, the sand and stones on the seashore are points, the</text>
<text class="ss" x="198" y="1408.500" textLength="182" lengthAdjust="spacingAndGlyphs">raindrops falling on the glass windows are points, the stars in the night sky are points,</text>
<text class="ss" x="198" y="1416">and the dust in the air is also points.</text>
<rect x="198" y="1433" width="68" height="58" fill="#7b7b7d"/>
<circle cx="207" cy="1449" r="7" fill="#ac6d4f"/><circle cx="206" cy="1474" r="7" fill="#ac6d4f"/><circle cx="230" cy="1474" r="7" fill="#ac6d4f"/>
<rect x="206" y="1487" width="6" height="4" fill="#222"/>
<text x="281" y="1439" font-size="7" font-weight="700" style="font-family:'Liberation Serif',serif;fill:#121212" textLength="102" lengthAdjust="spacingAndGlyphs">2. THE EXPRESSION OF THE DOT</text>
<rect x="281" y="1443" width="24" height="1.600" fill="#000"/>
<text class="ss" x="281" y="1454">Point, the interpretation of "O Dot" is small</text>
<text class="ss" x="281" y="1461.500">traces. In geometry, a point only has a position,</text>
<text class="ss" x="281" y="1469">while in morphology, a point also has modeling</text>
<text class="ss" x="281" y="1476.500">elements such as size, shape, color and texture.</text>
<text class="ss" x="281" y="1484">In nature, the sand and stones on the seashore</text>
<text class="ss" x="281" y="1491">are points. The raindrops falling on the glass</text>

<!-- toolbar -->
<circle cx="635.500" cy="94" r="11" class="i"/><path d="M630 94h11" class="i"/>
<text x="697" y="101" font-size="20" fill="#1f1f1f" textLength="37" lengthAdjust="spacingAndGlyphs">80%</text>
<path d="M773 90h9l-4.500 7Z" fill="#3c3c3e"/>
<circle cx="824.500" cy="94" r="11" class="i"/><path d="M819 94h11M824.500 88.500v11" class="i"/>
<rect x="869" y="85" width="1.200" height="15" fill="#6b6b6d"/>
<path d="M908 88h16M908 100l8-8 8 8" class="i"/>
<path d="M975 95l7.500-8 7.500 8M975 103l7.500-8 7.500 8" class="i"/>
<rect x="1028" y="75.500" width="99" height="34" rx="5" fill="#7d7d7f" stroke="#6b6b6d" stroke-width="1.200"/>
<text x="1049" y="100" font-size="21" fill="#1f1f1f" textLength="52" lengthAdjust="spacing">2 / 8</text>
<path d="M1164 87l8 8 8-8M1164 95l8 8 8-8" class="i"/>
<path d="M1229 89l8.500 8 8.500-8M1229 99.500h17" class="i"/>
<rect x="1284" y="85" width="1.200" height="15" fill="#6b6b6d"/>
<path d="M1322 101h-1a3 3 0 0 1-3-3V88a3 3 0 0 1 3-3h17a3 3 0 0 1 3 3v10a3 3 0 0 1-3 3h-1" class="i"/>
<path d="M1329.500 98l4 7h-8Z" fill="#222"/>
<rect x="1375.500" y="85" width="1.200" height="15" fill="#6b6b6d"/>
<path d="M1422 80v26M1422 84h-11a2.500 2.500 0 0 0-2.500 2.500v14a2.500 2.500 0 0 0 2.500 2.500h11M1422 84h11a2.500 2.500 0 0 1 2.500 2.500v14a2.500 2.500 0 0 1-2.500 2.500h-11" class="i"/>
<path d="M1412 90h6M1412 94h6M1412 98h6M1426 90h6M1426 94h6M1426 98h6" class="i" stroke-width="1.300"/>
<rect x="1467" y="85" width="1.200" height="15" fill="#6b6b6d"/>
<rect x="1502" y="81" width="13" height="14" rx="2.500" class="i"/>
<text x="1504.500" y="92" font-size="10.500" fill="#222">A</text>
<rect x="1512" y="94" width="13" height="13" rx="2.500" class="i" style="fill:#7d7d7f"/>
<text x="1513.500" y="104.500" font-size="10" fill="#222" style="font-family:'Noto Sans CJK SC',sans-serif">文</text>

<!-- right tools -->
<circle cx="1701" cy="89" r="9.500" class="i"/><path d="M1708 96l6 6" class="i" stroke-width="3"/><path d="M1697 84v5" class="i" stroke-width="1.200"/>
<rect x="1695" y="132.500" width="14" height="1" fill="#6f6f71"/>
<path d="M1688 171.500h29M1693 171v-7h20v7M1692 172v17h22v-17" class="i" stroke-width="1.500"/>
<text x="1695" y="185" font-size="9.500" font-weight="700" fill="#222" textLength="16" lengthAdjust="spacingAndGlyphs">OCR</text>
<path d="M1694 224h12l6 6v19a2 2 0 0 1-2 2h-16a2 2 0 0 1-2-2v-23a2 2 0 0 1 2-2Z" class="i"/><path d="M1705 224v6h7" class="i" stroke-width="1.200"/>
<path d="M1697 238a5.500 5.500 0 0 1 9-2l1.500 1.500M1707 241a5.500 5.500 0 0 1-9 2l-1.500-1.500M1707.500 233v4.500H1703M1696.500 246v-4.500h4.500" class="i" stroke-width="1.300"/>
<path d="M1704 310h-9a3 3 0 0 1-3-3V286a3 3 0 0 1 3-3h10l7 7v5M1705 283v7h7" class="i"/>
<rect x="1703" y="301" width="11" height="8.500" rx="2" class="i"/><path d="M1705.500 301v-2.500a3 3 0 0 1 6 0v2.500" class="i" stroke-width="1.300"/>
<path d="M1697 356h-2a3 3 0 0 0-3 3v8a3 3 0 0 0 3 3h15a3 3 0 0 0 3-3v-8a3 3 0 0 0-3-3h-2M1702.500 362v-17M1696.500 351l6-6 6 6" class="i"/>
<rect x="1690.500" y="406" width="23" height="20.500" rx="3" class="i"/><path d="M1691 409l11.500 8.500 11-8.500" class="i" stroke-width="1.400"/>
<rect x="1695" y="459.500" width="14" height="1" fill="#6f6f71"/>
<path d="M1695 488h16a3 3 0 0 1 3 3v19a3 3 0 0 1-3 3h-16a3 3 0 0 1-3-3v-19a3 3 0 0 1 3-3ZM1697 488v6h12v-6" class="i"/>
<circle cx="1703" cy="503.500" r="5" class="i" stroke-width="1.400"/>
<rect x="1695" y="544" width="14" height="1" fill="#6f6f71"/>
<path d="M1699 580l-5 4 5 4M1694 584h12a4.500 4.500 0 0 1 0 11h-8" fill="none" stroke="#686869" stroke-width="1.600" stroke-linecap="round" stroke-linejoin="round"/>
<path d="M1706 638l5 4-5 4M1711 642h-12a4.500 4.500 0 0 0 0 11h8" fill="none" stroke="#686869" stroke-width="1.600" stroke-linecap="round" stroke-linejoin="round"/>
<path d="M1702 1428c-2-6-12-8-12-1 0 4 4 6 6 7" fill="none" stroke="#7c4fd0" stroke-width="2.400" stroke-linecap="round"/>
<path d="M1702 1428c2-6 12-8 12-1 0 4-4 6-6 7" fill="none" stroke="#3a74c8" stroke-width="2.400" stroke-linecap="round"/>
<path d="M1696 1434c-2 1-6 3-6 7 0 7 10 5 12 -1" fill="none" stroke="#d19a1f" stroke-width="2.400" stroke-linecap="round"/>
<path d="M1708 1434c2 1 6 3 6 7 0 7-10 5-12-1" fill="none" stroke="#1f9a6a" stroke-width="2.400" stroke-linecap="round"/>
<path d="M1691.500 1491v-6a3 3 0 0 1 3-3h17a3 3 0 0 1 3 3v6M1697 1488h11" class="i"/>

<!-- dialog -->
<rect x="384" y="244" width="991" height="1037" rx="14" fill="#000" opacity=".12"/>
<rect x="386" y="246" width="987" height="1032" rx="13" fill="#f9f9fb"/>
<text class="b" x="410" y="288" textLength="140" lengthAdjust="spacingAndGlyphs">whitepaper.pdf</text>
<path d="M1324 271l16 16M1340 271l-16 16" stroke="#333" stroke-width="1.800" fill="none" stroke-linecap="round"/>
<rect x="416" y="319" width="928" height="1" fill="#ececef"/>

<!-- left panel -->
<rect x="418" y="353" width="490" height="890" rx="7" fill="#f1f1f3"/>
<rect class="box" x="449.500" y="377.500" width="429.500" height="37.500" rx="6"/>
<text class="u" x="462.500" y="404" textLength="257.500" lengthAdjust="spacingAndGlyphs">Document,Comment,Form Fields</text>
<path class="a" d="M861.500 394h9l-4.500 7Z"/>
<text class="l" x="449" y="457" textLength="79.500" lengthAdjust="spacingAndGlyphs">Paper Size:</text>
<rect class="box" x="616.500" y="432" width="262.500" height="37" rx="6"/>
<text class="u" x="629" y="458" textLength="56" lengthAdjust="spacingAndGlyphs">Tabloid</text>
<path class="a" d="M861.500 448h9l-4.500 7Z"/>
<text class="l" x="449" y="511" textLength="88" lengthAdjust="spacingAndGlyphs">Orientation:</text>
<rect class="box" x="616.500" y="486" width="262.500" height="37" rx="6"/>
<text class="u" x="629.500" y="512" textLength="57.500" lengthAdjust="spacingAndGlyphs">Portrait</text>
<path class="a" d="M861.500 502h9l-4.500 7Z"/>
<rect class="off" x="450.500" y="550" width="20.500" height="20" rx="3"/>
<text class="l" x="479" y="567" textLength="87.500" lengthAdjust="spacingAndGlyphs">Auto Rotate</text>
<rect class="on" x="763" y="550" width="20.500" height="20.500" rx="3"/>
<path class="ck" d="M768 560l3.500 3.500 6.500-6"/>
<text class="l" x="791.500" y="567" textLength="87.500" lengthAdjust="spacingAndGlyphs">Auto Center</text>
<rect x="449" y="605.500" width="159" height="1.200" fill="#e1e1e4"/>
<rect x="724" y="605.500" width="156" height="1.200" fill="#e1e1e4"/>
<text x="623" y="613" font-size="17" fill="#a0a0a3" textLength="82" lengthAdjust="spacingAndGlyphs">Scale:140%</text>

<!-- preview -->
<rect x="505.500" y="642.500" width="316" height="485" fill="#d5d5d9"/>
<svg x="506.500" y="643.500" width="314.500" height="483" viewBox="0 0 315 484">
<rect width="315" height="484" fill="#fff"/>
<rect x="12" y="12" width="5" height="5" fill="#b2b2b2"/><path d="M22 12l3 5h-6Z" fill="#b2b2b2"/><circle cx="30" cy="14.500" r="2.500" fill="#b2b2b2"/>
<text class="sf" x="295" y="17.500" textLength="9" style="fill:#555">12</text>
<rect x="12" y="20.500" width="291" height="1" fill="#5a5a5a"/>
<g clip-path="url(#cp-ph1)"><g filter="url(#b1)">
<rect x="129" y="27" width="174" height="228" fill="#55555b"/>
<path d="M161 27H267L251 84L171 92Z" fill="#bcc3c7"/>
<path d="M129 27H161L151 42L129 56Z" fill="#1c1a1a"/><path d="M267 27H303V62L272 36Z" fill="#1b1919"/>
<path d="M129 56L151 40Q160 95 155 125Q148 160 151 194H129Z" fill="#b87a52"/>
<path d="M303 62L272 38L262 100Q285 115 303 162Z" fill="#9c7048"/>
<path d="M143 48Q155 110 147 135Q141 165 145 194" stroke="#221a16" stroke-width="2" fill="none"/>
<path d="M283 48Q272 90 298 135" stroke="#1e1a18" stroke-width="2" fill="none"/>
<path d="M157 92L258 118L262 130L158 104Z" fill="#e9e3d6"/>
<path d="M158 104L262 130L262 138L160 112Z" fill="#1f1f22"/>
<path d="M152 108L183 116Q162 150 172 170T190 200L151 200Q156 150 150 140Z" fill="#8d8d94"/>
<path d="M258 130L282 135Q302 170 290 200T296 255H262Q280 210 270 180Z" fill="#868690"/>
<ellipse cx="226" cy="164" rx="40" ry="38" fill="#1a191c"/>
<path d="M199 146H214L212 194H197ZM225 146H237L242 194H226Z" fill="#6f7276"/>
<path d="M204 146l-2 48M208 146l-1 48M230 146l2 48M234 146l2 48" stroke="#232326" stroke-width="1" fill="none"/>
<path d="M190 194H290V255H222Q205 225 190 194Z" fill="#434349"/>
<path d="M206 165q-7 8-10 20M246 150q12 6 20 24" stroke="#d99a50" stroke-width="1.400" fill="none"/>
<path d="M165 42h96M161 60h98M167 78h84M190 27l3 62M215 27v62M240 27l-3 62" stroke="#33363a" stroke-width="1" fill="none"/>
<path d="M175 70h55" stroke="#222" stroke-width="3" stroke-dasharray="2 3"/>
<ellipse cx="258" cy="186" rx="8" ry="5" fill="#17171a"/><ellipse cx="240" cy="206" rx="7" ry="5" fill="#17171a"/>
</g></g>
<g fill="#dcbcfb"><rect x="18" y="33" width="80" height="11"/><rect x="18" y="44" width="60" height="11"/><rect x="18" y="55" width="81" height="11"/><rect x="18" y="66" width="94" height="11"/><rect x="18" y="77" width="80" height="11"/><rect x="18" y="88" width="96" height="11"/></g>
<text class="sf" x="18" y="39.500" textLength="77" lengthAdjust="spacingAndGlyphs">Combined with practical</text>
<text class="sf" x="18" y="50.500" textLength="58" lengthAdjust="spacingAndGlyphs">cases, the building</text>
<text class="sf" x="18" y="61.500" textLength="79" lengthAdjust="spacingAndGlyphs">environment information</text>
<text class="sf" x="18" y="72.500" textLength="92" lengthAdjust="spacingAndGlyphs">modeling method integrating</text>
<text class="sf" x="18" y="83.500" textLength="78" lengthAdjust="spacingAndGlyphs">multi-view image data is</text>
<text class="sf" x="18" y="94.500" textLength="94" lengthAdjust="spacingAndGlyphs">explored, aiming at improving</text>
<text class="sf" x="18" y="105.500" textLength="77" lengthAdjust="spacingAndGlyphs">the efficiency of building</text>
<text class="sf" x="18" y="116.500" textLength="79" lengthAdjust="spacingAndGlyphs">environment information</text>
<rect x="34" y="113.500" width="63" height="1" fill="#d0304a"/>
<text class="sf" x="18" y="127.500" textLength="89" lengthAdjust="spacingAndGlyphs">modeling and improving the</text>
<text class="sf" x="18" y="138.500" textLength="95" lengthAdjust="spacingAndGlyphs">modeling accuracy of building</text>
<text class="sf" x="18" y="149.500" textLength="91" lengthAdjust="spacingAndGlyphs">local information such as the</text>
<text class="sf" x="18" y="160.500" textLength="93" lengthAdjust="spacingAndGlyphs">bottom of eaves, and Add new</text>
<text class="sf" x="18" y="171.500" textLength="72" lengthAdjust="spacingAndGlyphs">text here exploring the</text>
<text class="sf" x="18" y="182.500" textLength="91" lengthAdjust="spacingAndGlyphs">technical route of multi-view</text>
<text class="sf" x="18" y="193.500" textLength="56" lengthAdjust="spacingAndGlyphs">image data fusion.</text>
<text class="sf" x="165.500" y="279.500" textLength="122" lengthAdjust="spacingAndGlyphs">constructed, multi-view image data are</text>
<text class="sf" x="165.500" y="290.500" textLength="113" lengthAdjust="spacingAndGlyphs">fused, and ground images and aerial</text>
<text class="sf" x="165.500" y="301.500" textLength="107" lengthAdjust="spacingAndGlyphs">images are fused. The blind area is</text>
<text class="sf" x="165.500" y="312.500" textLength="136" lengthAdjust="spacingAndGlyphs">supplemented by the image to realize multi-</text>
<text class="sf" x="165.500" y="323.500" textLength="119" lengthAdjust="spacingAndGlyphs">angle and all-round image acquisition.</text>
<text class="sf" x="165.500" y="334.500" textLength="125" lengthAdjust="spacingAndGlyphs">Through aerial triangulation processing,</text>
<text class="sf" x="165.500" y="345.500" textLength="125" lengthAdjust="spacingAndGlyphs">dense matching, and texture mapping, a</text>
<text class="sf" x="165.500" y="356.500" textLength="136" lengthAdjust="spacingAndGlyphs">three-dimensional digital model of building</text>
<text class="sf" x="165.500" y="367.500" textLength="135" lengthAdjust="spacingAndGlyphs">environment information of practical cases</text>
<text class="sf" x="165.500" y="378.500" textLength="124" lengthAdjust="spacingAndGlyphs">is generated. The practical results show</text>
<text class="sf" x="165.500" y="389.500" textLength="120" lengthAdjust="spacingAndGlyphs">that through the fusion of low-altitude</text>
<text class="sf" x="165.500" y="400.500" textLength="120" lengthAdjust="spacingAndGlyphs">photography and Ground photographic</text>
<text class="sf" x="165.500" y="411.500" textLength="127" lengthAdjust="spacingAndGlyphs">image data can significantly improve the</text>
<text class="sf" x="165.500" y="422.500" textLength="97" lengthAdjust="spacingAndGlyphs">modeling efficiency of building</text>
<text class="sf" x="165.500" y="433.500" textLength="136" lengthAdjust="spacingAndGlyphs">environment information and the modeling</text>
<text class="sf" x="165.500" y="444.500" textLength="123" lengthAdjust="spacingAndGlyphs">accuracy of building detail information,</text>
<text class="sf" x="165.500" y="455.500" textLength="99" lengthAdjust="spacingAndGlyphs">solve the problem of incomplete</text>
<text class="sf" x="165.500" y="466.500" textLength="37" lengthAdjust="spacingAndGlyphs">information</text>
<g clip-path="url(#cp-ph2)"><g filter="url(#b1)">
<rect x="15" y="275" width="138" height="93" fill="#d3d9d8"/>
<rect x="80" y="275" width="45" height="30" fill="#aeb6b4"/><rect x="121" y="275" width="32" height="93" fill="#2e3836"/>
<path d="M86 297l36-5v35l-36 7Z" fill="#2a2a2c"/><path d="M89 300l30-4v29l-30 5Z" fill="#8c9496"/><rect x="100" y="304" width="9" height="18" fill="#a88a80"/>
<path d="M15 287H37L48 330L30 368H15Z" fill="#212123"/>
<path d="M31 307H61L71 334L77 368H31Z" fill="#17171a"/>
<circle cx="50" cy="291" r="10.500" fill="#bf9a86"/><path d="M39 292q1-13 12-13 9 0 10 6-12-1-13 6l-1 9Z" fill="#16161a"/>
<rect x="41" y="284" width="5" height="14" rx="2.500" fill="#0c0c0e"/>
<path d="M37 317L50 349L97 344" stroke="#a57e66" stroke-width="8" fill="none" stroke-linejoin="round"/>
<path d="M74 346L153 330V368H77Z" fill="#29292b"/>
<path d="M88 333l36 8-14 8-34-7Z" fill="#d5d6d6"/>
<ellipse cx="98" cy="350" rx="9" ry="5" fill="#a67f69"/>
</g></g>
<text class="sf" x="15" y="387" textLength="137" lengthAdjust="spacingAndGlyphs">Combined with practical cases, low-altitude</text>
<text class="sf" x="15" y="398" textLength="131" lengthAdjust="spacingAndGlyphs">photogrammetry and ground photography</text>
<text class="sf" x="15" y="409" textLength="116" lengthAdjust="spacingAndGlyphs">are carried out, and architectural and</text>
<text class="sf" x="15" y="420" textLength="119" lengthAdjust="spacingAndGlyphs">environmental image data of practical</text>
<text class="sf" x="15" y="431" textLength="129" lengthAdjust="spacingAndGlyphs">cases are collected; connection points are</text>
<text class="sf" x="15" y="442" textLength="122" lengthAdjust="spacingAndGlyphs">constructed, multi-view image data are</text>
<rect x="15" y="193" width="215" height="73" fill="#ff8534"/>
<text class="rb" x="27" y="219.700" textLength="137" lengthAdjust="spacingAndGlyphs">Building environment</text>
<text class="rb" x="27" y="235.200" textLength="193" lengthAdjust="spacingAndGlyphs">information modeling method</text>
<text class="rb" x="27" y="252" textLength="173" lengthAdjust="spacingAndGlyphs">based on multi-view image</text>
<rect x="27" y="230" width="202" height="1" fill="#9a7ac8"/>
<path d="M103 100L182 130" stroke="#e0406e" stroke-width="1.200"/>
<path d="M101 99l8 0-3 5Z" fill="#e0406e"/>
<rect x="182" y="117.500" width="55" height="29" fill="#2f2b2b" stroke="#d03a68" stroke-width="1.200"/>
<text x="184" y="126" font-size="9.500" fill="#e0e0e0">Check this</text><text x="184" y="136.500" font-size="9.500" fill="#e0e0e0">here</text>
<rect x="114" y="23" width="10" height="9" fill="#cc2020"/>
<path d="M116 42l6-5-2 8-5 2Z" fill="#e8e65a"/>
<rect x="151" y="273" width="31" height="10" rx="5" fill="none" stroke="#ee9cb0" stroke-width="1" stroke-dasharray="2 1"/>
</svg>

<!-- nav -->
<rect x="518" y="1163" width="291" height="48" rx="16" fill="#f9f9fb" stroke="#e2e2e5" stroke-width="1.400"/>
<rect x="611" y="1170" width="104" height="34" rx="3" fill="#fff"/>
<path d="M533 1180v13M545 1180l-7 6.500 7 6.500" fill="none" stroke="#a9a9ac" stroke-width="1.500"/>
<path d="M583 1180l-7 6.500 7 6.500M591 1180l-7 6.500 7 6.500" fill="none" stroke="#a9a9ac" stroke-width="1.500"/>
<text x="640" y="1193" font-size="18" fill="#333">1</text>
<text x="667" y="1194" font-size="19" fill="#333">/</text>
<text x="690" y="1193" font-size="18" fill="#333">8</text>
<path d="M734 1180l7 6.500-7 6.500M742 1180l7 6.500-7 6.500" fill="none" stroke="#333" stroke-width="1.500"/>
<path d="M780 1180l7 6.500-7 6.500M794 1180v13" fill="none" stroke="#333" stroke-width="1.500"/>

<!-- highlighted printer -->
<rect x="940.500" y="341" width="408" height="63" rx="1" fill="#fbfbfd" stroke="#c9bfec" stroke-width="7"/>
<rect class="box" x="947.500" y="354" width="344" height="37.500" rx="6"/>
<text class="u" x="960.500" y="380" textLength="175" lengthAdjust="spacingAndGlyphs">Microsoft Print to PDF</text>
<path class="a" d="M1274 369h9l-4.500 7Z"/>
<rect x="1298.500" y="354" width="37.500" height="37.500" rx="5" fill="#f6f6f8" stroke="#d5d5d9" stroke-width="1.200"/>
<path d="M1311 366v-5.500a1.500 1.500 0 0 1 1.500-1.500h10a1.500 1.500 0 0 1 1.500 1.500V366M1311 380h-3a2 2 0 0 1-2-2v-9a3 3 0 0 1 3-3h17a3 3 0 0 1 3 3v9a2 2 0 0 1-2 2h-3" fill="none" stroke="#333" stroke-width="1.500" stroke-linejoin="round"/>
<rect x="1311.500" y="375" width="12" height="10.500" fill="none" stroke="#333" stroke-width="1.500"/>
<path d="M1314 378.500h7M1314 382h7M1322 370.500h3" stroke="#333" stroke-width="1.200"/>

<text class="l" x="947" y="430" textLength="52" lengthAdjust="spacingAndGlyphs">Copies:</text>
<rect class="box" x="1161" y="402" width="81" height="40" rx="5"/>
<path d="M1157 400h90v7.500h-90Z" fill="#c9bfec"/>
<text class="u" x="1170" y="431">1</text>
<path fill="#8a8a8e" d="M1225.500 421l4.500-6 4.500 6Z"/><path fill="#c3c3c6" d="M1225.500 428l4.500 6 4.500-6Z"/>
<rect class="on" x="1257" y="414" width="20.500" height="20.500" rx="3"/>
<path class="ck" d="M1262 424l3.500 3.500 6.500-6"/>
<text class="l" x="1284" y="430" textLength="52.500" lengthAdjust="spacingAndGlyphs">Collate</text>
<rect class="on" x="949" y="456" width="20.500" height="21" rx="3"/>
<path class="ck" d="M954 466.500l3.500 3.500 6.500-6"/>
<text class="l" x="977.500" y="474" textLength="105" lengthAdjust="spacingAndGlyphs">Print As Image</text>
<rect class="off" x="949" y="493" width="20.500" height="20" rx="3"/>
<text class="l" x="977.500" y="510" textLength="252.500" lengthAdjust="spacingAndGlyphs">Print in grayscale (black and white)</text>
<rect x="972" y="538" width="340" height="1" fill="#ececef"/>
<text class="b" x="947.500" y="584" textLength="129.500" lengthAdjust="spacingAndGlyphs" style="font-size:19px">Pages to Print</text>

<rect x="947" y="600" width="390" height="233" rx="7" fill="#f1f1f3"/>
<rect class="box" x="962.500" y="615" width="354.500" height="37.500" rx="6"/>
<text class="u" x="975.500" y="641" textLength="59.500" lengthAdjust="spacingAndGlyphs">Custom</text>
<path class="a" d="M1299.500 630.500h9l-4.500 7Z"/>
<rect class="box" x="962.500" y="665" width="357.500" height="36.500" rx="6"/>
<text class="u" x="976" y="690.500" textLength="25" lengthAdjust="spacingAndGlyphs">1-8</text>
<circle cx="1300" cy="683" r="7.800" fill="none" stroke="#6f6f72" stroke-width="1.200"/>
<text x="1296.800" y="687.500" font-size="11.500" fill="#6f6f72">?</text>
<text class="l" x="962.500" y="734" textLength="135" lengthAdjust="spacingAndGlyphs">Odd or Even Pages</text>
<rect class="box" x="962.500" y="746" width="354.500" height="36.500" rx="6"/>
<text class="u" x="975.500" y="771.500" textLength="145.500" lengthAdjust="spacingAndGlyphs">All Pages in Range</text>
<path class="a" d="M1299.500 761h9l-4.500 7Z"/>
<rect class="off" x="964" y="796.500" width="20" height="20" rx="3"/>
<text class="l" x="992.500" y="813" textLength="105" lengthAdjust="spacingAndGlyphs">Reverse Pages</text>

<text class="b" x="947.500" y="883" textLength="237" lengthAdjust="spacingAndGlyphs" style="font-size:19.500px">Page Sizing and Handling</text>
<rect class="box" x="1231.500" y="857" width="106.500" height="36" rx="6"/>
<text class="u" x="1244" y="883" textLength="30" lengthAdjust="spacingAndGlyphs">Size</text>
<path class="a" d="M1320.500 872h9l-4.500 7Z"/>
<rect x="947" y="907" width="390" height="176" rx="7" fill="#f1f1f3"/>
<circle class="on" cx="974" cy="934" r="10.500"/><circle cx="974" cy="934" r="4.800" fill="#fff"/>
<text class="l" x="995" y="940" textLength="17" lengthAdjust="spacingAndGlyphs">Fit</text>
<circle class="ro" cx="1061" cy="934" r="10"/>
<text class="l" x="1082.500" y="940" textLength="80" lengthAdjust="spacingAndGlyphs">Actual Size</text>
<circle class="ro" cx="974" cy="976" r="10"/>
<text class="l" x="995" y="982" textLength="129" lengthAdjust="spacingAndGlyphs">Custom Scale (%):</text>
<rect x="1241" y="959" width="79" height="36" rx="4" fill="#fbfbfd"/>
<text x="1251" y="985" font-size="18" fill="#b5b5b8" textLength="26" lengthAdjust="spacingAndGlyphs">100</text>
<path fill="#c3c3c6" d="M1305.500 973l4.500-6 4.500 6Z"/><path fill="#b0b0b4" d="M1305.500 980l4.500 6 4.500-6Z"/>
<circle class="ro" cx="974" cy="1018" r="10"/>
<text class="l" x="995" y="1024" textLength="165.500" lengthAdjust="spacingAndGlyphs">Shrink oversized pages</text>
<circle class="ro" cx="974" cy="1057" r="10"/>
<text class="l" x="995" y="1063" textLength="279.500" lengthAdjust="spacingAndGlyphs">Choose paper source by PDF page size</text>
<rect class="on" x="949" y="1102" width="20.500" height="20.500" rx="3"/>
<path class="ck" d="M954 1112l3.500 3.500 6.500-6"/>
<text class="l" x="977" y="1119" textLength="201" lengthAdjust="spacingAndGlyphs">Print on both sides of paper</text>
<rect class="box" x="947.500" y="1137" width="390.500" height="37" rx="6"/>
<text class="u" x="960.500" y="1163" textLength="137.500" lengthAdjust="spacingAndGlyphs">Flip on long edge</text>
<path class="a" d="M1320.500 1152h9l-4.500 7Z"/>
<rect x="949" y="1189" width="187" height="47" rx="4" fill="#c191fb"/>
<text x="1022.500" y="1221" font-size="19" fill="#f3eafe" textLength="39.500" lengthAdjust="spacingAndGlyphs">Print</text>
<rect x="1150.500" y="1189.500" width="186" height="46.500" rx="4" fill="#fbfbfd" stroke="#d9d9dd" stroke-width="1.200"/>
<text x="1214" y="1221" font-size="19.500" fill="#3b3b3e" textLength="57" lengthAdjust="spacingAndGlyphs">Cancel</text>

<!-- arrow -->
<path d="M167 1297L874 1214L874 1201L923 1218L880 1245L881 1232L167 1301Z" fill="#c6bce9"/>
</svg>
</body></html>
